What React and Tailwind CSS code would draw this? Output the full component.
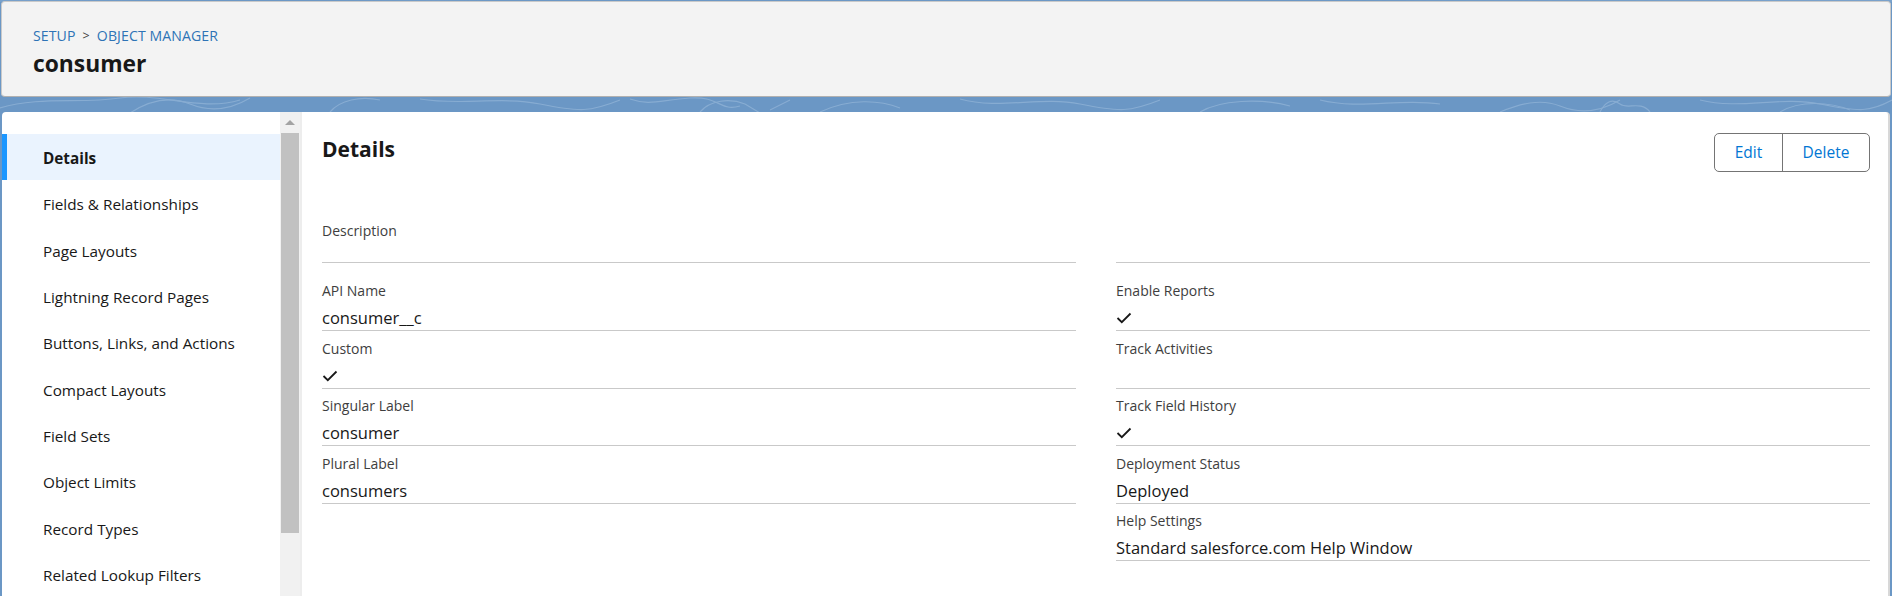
import React from "react";

const navItems = [
  "Details",
  "Fields & Relationships",
  "Page Layouts",
  "Lightning Record Pages",
  "Buttons, Links, and Actions",
  "Compact Layouts",
  "Field Sets",
  "Object Limits",
  "Record Types",
  "Related Lookup Filters",
];

function Check() {
  return (
    <svg width="16" height="12" viewBox="0 0 16 12" className="block">
      <polyline points="1.5,6 5.8,10.2 14.5,1.5" fill="none" stroke="#181818" strokeWidth="1.8" />
    </svg>
  );
}

function Field({ label, value, check, valueH = "h-[24px]", extraTop = "" }) {
  return (
    <div className={`border-b border-[#c9c9c9] pt-[6.5px] ${extraTop}`}>
      <div className="h-[21px] text-[14px] leading-[21px] text-[#3e3e3e]">{label}</div>
      <div className={`mt-[5px] ${valueH} flex items-center text-[16.5px] leading-[24px] text-[#181818]`}>
        {check ? <Check /> : value}
      </div>
    </div>
  );
}

function Pattern() {
  return (
    <svg className="absolute inset-0" width="1892" height="596" viewBox="0 0 1892 596" preserveAspectRatio="none">
      <g fill="none" stroke="#8fb2d6" strokeWidth="1.2" opacity="0.8">
        <path d="M0 108 C 40 96, 80 104, 120 98 S 200 112, 240 100" />
        <path d="M130 113 C 150 100, 170 96, 190 104 S 230 110, 250 98" />
        <path d="M330 112 C 340 100, 360 96, 380 100" />
        <path d="M420 99 C 460 106, 500 96, 540 104 S 590 112, 620 100" />
        <path d="M630 99 C 650 106, 660 100, 690 98 S 720 112, 740 106" />
        <path d="M700 112 C 710 100, 730 98, 745 104 L 760 113" />
        <path d="M770 110 L 790 100" />
        <path d="M820 112 C 850 98, 880 100, 900 108" />
        <path d="M960 99 C 1000 110, 1040 96, 1080 104 S 1130 112, 1160 100" />
        <path d="M1200 112 C 1220 100, 1260 98, 1290 106" />
        <path d="M1320 100 C 1360 110, 1400 98, 1440 104" />
        <path d="M1500 112 C 1520 104, 1540 98, 1560 106 S 1600 112, 1620 100" />
        <path d="M1600 112 C 1605 102, 1612 98, 1620 104 C 1628 110, 1640 100, 1650 112" />
        <path d="M1700 100 C 1740 110, 1780 96, 1820 104 S 1870 112, 1892 100" />
        <path d="M1780 112 C 1800 100, 1830 102, 1850 110" />
        <path d="M0 1 C 200 3, 400 0, 600 2 S 1200 3, 1892 1" />
      </g>
    </svg>
  );
}

export default function App() {
  return (
    <div
      className="relative w-[1892px] h-[596px] overflow-hidden bg-[#6b97c5]"
      style={{ fontFamily: '"Open Sans", "Noto Sans", sans-serif' }}
    >
      <Pattern />
      <div className="relative flex flex-col h-full">
        {/* Header */}
        <div className="mx-[1px] mt-[1px] h-[96px] shrink-0 rounded-[4px] border border-[#c9c9c9] border-b-[#b0b0b0] bg-[#f3f3f3] pl-[31px]">
          <div className="mt-[24px] flex items-center h-[20px] text-[14.1px] leading-[20px] text-[#2e73b6] tracking-[0.1px]">
            <span>SETUP</span>
            <span className="mx-[7px] text-[#3e3e3e] text-[12.5px]">&gt;</span>
            <span>OBJECT MANAGER</span>
          </div>
          <div className="mt-[3px] h-[30px] text-[22.8px] leading-[30px] font-bold text-[#181818]">consumer</div>
        </div>

        {/* Body card */}
        <div className="mt-[15px] mx-[2px] flex flex-1 rounded-t-[4px] bg-white overflow-hidden border-r-2 border-[#d8d8d8]">
          {/* Sidebar */}
          <div className="w-[300px] shrink-0 flex border-r-2 border-[#ededed]">
            <div className="w-[278px] pt-[22px]">
              {navItems.map((item, i) => (
                <div
                  key={item}
                  className={
                    i === 0
                      ? "relative h-[46.4px] flex items-center pl-[41px] bg-[#eaf3fe] text-[15.3px] font-bold text-[#181818]"
                      : "relative h-[46.4px] flex items-center pl-[41px] pt-[2px] text-[15.3px] text-[#181818]"
                  }
                >
                  {i === 0 && <div className="absolute left-0 top-0 bottom-0 w-[5px] bg-[#1b96ff]" />}
                  <span className={i === 0 ? "pt-[2px]" : ""}>{item}</span>
                </div>
              ))}
            </div>
            <div className="w-[20px] bg-[#f1f1f1] flex flex-col">
              <div className="h-[21px] flex items-center justify-center">
                <div className="w-0 h-0 border-l-[5px] border-r-[5px] border-b-[5px] border-l-transparent border-r-transparent border-b-[#a3a3a3]" />
              </div>
              <div className="mx-[1px] h-[400px] bg-[#c1c1c1]" />
            </div>
          </div>

          {/* Main */}
          <div className="flex-1 pl-[20px] pr-[18px] pt-[21px]">
            <div className="flex items-start justify-between h-[39px]">
              <div className="pt-[3px] text-[21px] leading-[26px] font-bold text-[#181818]">Details</div>
              <div className="flex h-[39px] rounded-[5px] border border-[#747474] text-[15.5px] text-[#0176d3]">
                <div className="w-[68px] flex items-center justify-center border-r border-[#747474]">Edit</div>
                <div className="w-[86px] flex items-center justify-center">Delete</div>
              </div>
            </div>

            <div className="mt-[41px] grid grid-cols-2 gap-x-[40px]">
              <Field label="Description" value="" valueH="h-[16.5px]" />
              <div className="border-b border-[#c9c9c9]" />

              <Field label="API Name" value="consumer__c" extraTop="pt-[17px]" />
              <Field label="Enable Reports" check extraTop="pt-[17px]" />

              <Field label="Custom" check />
              <Field label="Track Activities" value="" />

              <Field label="Singular Label" value="consumer" />
              <Field label="Track Field History" check />

              <Field label="Plural Label" value="consumers" />
              <Field label="Deployment Status" value="Deployed" />

              <div />
              <Field label="Help Settings" value="Standard salesforce.com Help Window" />
            </div>
          </div>
        </div>
      </div>
    </div>
  );
}
